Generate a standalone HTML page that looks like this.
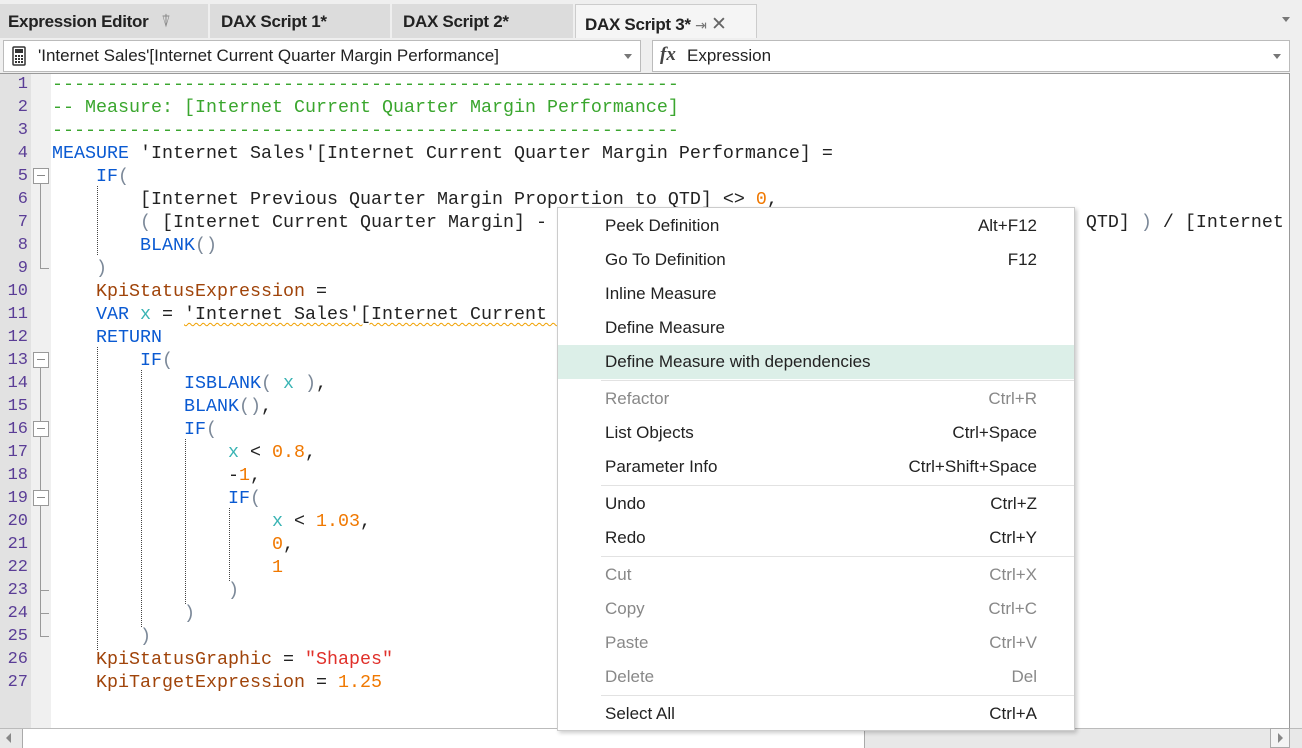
<!DOCTYPE html>
<html><head><meta charset="utf-8"><style>
*{margin:0;padding:0;box-sizing:border-box}
body{width:1302px;height:748px;overflow:hidden;background:#efefef;font-family:"Liberation Sans",sans-serif;position:relative}
.tab{position:absolute;top:4px;height:34px;background:#dcdcdc;font-weight:bold;font-size:17px;color:#222;padding:8px 0 0 8px;letter-spacing:-0.3px}
.combo{position:absolute;top:40px;height:32px;background:#fff;border:1px solid #bbb;font-size:17px;color:#222;padding:5px 0 0 34px}
.arr{position:absolute;right:8px;top:13px;width:0;height:0;border-left:4px solid transparent;border-right:4px solid transparent;border-top:5px solid #777}
#ed{position:absolute;left:0;top:73px;width:1290px;height:655px;background:#fff;border-top:1px solid #999;border-right:1px solid #999;overflow:hidden}
#ln{position:absolute;left:0;top:0;width:31px;height:655px;background:#e2e2e2}
#fd{position:absolute;left:31px;top:0;width:20px;height:655px;background:#f0f0f0}
.l{position:absolute;left:52px;height:23px;font-family:"Liberation Mono",monospace;font-size:18.33px;line-height:23px;white-space:pre;color:#222}
.n{position:absolute;left:0;width:28px;text-align:right;font-family:"Liberation Mono",monospace;font-size:17px;line-height:23px;color:#5a3d96}
.c{color:#3aa62e}.k{color:#0a5ad2}.b{color:#a0440a}.s{color:#e0302a}.o{color:#f07800}.x{color:#3ab4b4}.p{color:#7b8898}
.fb{position:absolute;left:33px;width:16px;height:16px;border:1px solid #999;background:#fff}
.fb:after{content:"";position:absolute;left:3px;top:6px;width:8px;height:1px;background:#888}
.fl{position:absolute;left:40px;width:1px;background:#999}
.ft{position:absolute;left:40px;width:9px;height:1px;background:#999}
.g{position:absolute;width:0;border-left:1px dotted #444}
#menu{position:absolute;left:557px;top:207px;width:518px;height:524px;background:#fff;border:1px solid #ccc;box-shadow:2px 2px 4px rgba(0,0,0,.2);font-size:17px}
.mi{position:absolute;left:0;width:516px;height:34px;line-height:34px;padding-left:47px;color:#222}
.mi span{position:absolute;right:37px;top:0}
.dis{color:#888}
.sep{position:absolute;left:43px;right:0;height:1px;background:#e2e2e2}
</style></head><body>
<div class="tab" style="left:0;width:208px">Expression Editor <span style="color:#888;font-weight:normal;margin-left:8px">&#x2352;</span></div>
<div class="tab" style="left:210px;width:180px;padding-left:11px">DAX Script 1*</div>
<div class="tab" style="left:392px;width:181px;padding-left:11px">DAX Script 2*</div>
<div class="tab" style="left:575px;width:182px;background:#f5f5f5;border:1px solid #ccc;border-bottom:none;padding-left:9px">DAX Script 3* <span style="font-weight:normal;color:#777;font-size:14px">&#x21E5;</span> <span style="font-weight:normal;color:#666;font-size:19px">✕</span></div>
<div class="arr" style="right:12px;top:17px;left:auto;position:absolute"></div>
<div class="combo" style="left:3px;width:638px"><svg style="position:absolute;left:8px;top:5px" width="14" height="20" viewBox="0 0 14 20"><rect x="1" y="1" width="12" height="18" rx="1" fill="none" stroke="#333" stroke-width="1.5"/><rect x="3" y="3" width="8" height="4" fill="#333"/><g fill="#333"><rect x="3" y="9" width="2" height="2"/><rect x="6" y="9" width="2" height="2"/><rect x="9" y="9" width="2" height="2"/><rect x="3" y="12" width="2" height="2"/><rect x="6" y="12" width="2" height="2"/><rect x="9" y="12" width="2" height="2"/><rect x="3" y="15" width="2" height="2"/><rect x="6" y="15" width="2" height="2"/><rect x="9" y="15" width="2" height="2"/></g></svg>'Internet Sales'[Internet Current Quarter Margin Performance]<div class="arr"></div></div>
<div class="combo" style="left:652px;width:638px"><span style="position:absolute;left:7px;top:3px;font-family:'Liberation Serif',serif;font-style:italic;font-weight:bold;font-size:19px;color:#444">fx</span>Expression<div class="arr"></div></div>
<div id="ed">
<div id="ln"></div><div id="fd"></div>
<div class="n" style="top:-1px">1</div><div class="n" style="top:22px">2</div><div class="n" style="top:45px">3</div><div class="n" style="top:68px">4</div><div class="n" style="top:91px">5</div><div class="n" style="top:114px">6</div><div class="n" style="top:137px">7</div><div class="n" style="top:160px">8</div><div class="n" style="top:183px">9</div><div class="n" style="top:206px">10</div><div class="n" style="top:229px">11</div><div class="n" style="top:252px">12</div><div class="n" style="top:275px">13</div><div class="n" style="top:298px">14</div><div class="n" style="top:321px">15</div><div class="n" style="top:344px">16</div><div class="n" style="top:367px">17</div><div class="n" style="top:390px">18</div><div class="n" style="top:413px">19</div><div class="n" style="top:436px">20</div><div class="n" style="top:459px">21</div><div class="n" style="top:482px">22</div><div class="n" style="top:505px">23</div><div class="n" style="top:528px">24</div><div class="n" style="top:551px">25</div><div class="n" style="top:574px">26</div><div class="n" style="top:597px">27</div>
<div class="fl" style="top:110px;height:85px"></div><div class="ft" style="top:194px"></div>
<div class="fl" style="top:294px;height:269px"></div><div class="ft" style="top:562px"></div><div class="ft" style="top:539px"></div><div class="ft" style="top:516px"></div>
<div class="fb" style="top:94px"></div><div class="fb" style="top:278px"></div><div class="fb" style="top:347px"></div><div class="fb" style="top:416px"></div>
<div class="g" style="left:97px;top:112px;height:69px"></div>
<div class="g" style="left:97px;top:273px;height:303px"></div>
<div class="g" style="left:141px;top:296px;height:257px"></div>
<div class="g" style="left:185px;top:365px;height:165px"></div>
<div class="g" style="left:229px;top:434px;height:73px"></div>
<div class="l c" style="top:-1px">---------------------------------------------------------</div>
<div class="l c" style="top:22px">-- Measure: [Internet Current Quarter Margin Performance]</div>
<div class="l c" style="top:45px">---------------------------------------------------------</div>
<div class="l" style="top:68px"><span class="k">MEASURE</span> 'Internet Sales'[Internet Current Quarter Margin Performance] =</div>
<div class="l" style="top:91px">    <span class="k">IF</span><span class="p">(</span></div>
<div class="l" style="top:114px">        [Internet Previous Quarter Margin Proportion to QTD] &lt;&gt; <span class="o">0</span>,</div>
<div class="l" style="top:137px">        <span class="p">(</span> [Internet Current Quarter Margin] - [Internet Previous Quarter Margin Proportion to QTD] <span class="p">)</span> / [Internet</div>
<div class="l" style="top:160px">        <span class="k">BLANK</span><span class="p">()</span></div>
<div class="l" style="top:183px">    <span class="p">)</span></div>
<div class="l b" style="top:206px">    KpiStatusExpression <span style="color:#222">=</span></div>
<div class="l" style="top:229px">    <span class="k">VAR</span> <span class="x">x</span> = <span style="text-decoration:underline wavy #f0a000;text-decoration-thickness:1px;text-underline-offset:3px">'Internet Sales'[Internet Current </span></div>
<div class="l" style="top:252px">    <span class="k">RETURN</span></div>
<div class="l" style="top:275px">        <span class="k">IF</span><span class="p">(</span></div>
<div class="l" style="top:298px">            <span class="k">ISBLANK</span><span class="p">(</span> <span class="x">x</span> <span class="p">)</span>,</div>
<div class="l" style="top:321px">            <span class="k">BLANK</span><span class="p">()</span>,</div>
<div class="l" style="top:344px">            <span class="k">IF</span><span class="p">(</span></div>
<div class="l" style="top:367px">                <span class="x">x</span> &lt; <span class="o">0.8</span>,</div>
<div class="l" style="top:390px">                -<span class="o">1</span>,</div>
<div class="l" style="top:413px">                <span class="k">IF</span><span class="p">(</span></div>
<div class="l" style="top:436px">                    <span class="x">x</span> &lt; <span class="o">1.03</span>,</div>
<div class="l" style="top:459px">                    <span class="o">0</span>,</div>
<div class="l" style="top:482px">                    <span class="o">1</span></div>
<div class="l" style="top:505px">                <span class="p">)</span></div>
<div class="l" style="top:528px">            <span class="p">)</span></div>
<div class="l" style="top:551px">        <span class="p">)</span></div>
<div class="l b" style="top:574px">    KpiStatusGraphic <span style="color:#222">=</span> <span class="s">"Shapes"</span></div>
<div class="l b" style="top:597px">    KpiTargetExpression <span style="color:#222">=</span> <span class="o">1.25</span></div>
</div>
<div style="position:absolute;left:0;top:728px;width:1302px;height:20px;background:#e8e8e8;border-top:1px solid #bbb"></div>
<div style="position:absolute;left:22px;top:729px;width:843px;height:19px;background:#fff;border-left:1px solid #aaa;border-right:1px solid #aaa"></div>
<div style="position:absolute;left:6px;top:733px;border-top:5px solid transparent;border-bottom:5px solid transparent;border-right:5px solid #888"></div>
<div style="position:absolute;left:1270px;top:728px;width:20px;height:20px;border:1px solid #aaa;background:#f4f4f4"></div>
<div style="position:absolute;left:1278px;top:733px;border-top:5px solid transparent;border-bottom:5px solid transparent;border-left:5px solid #888"></div>
<div id="menu">
<div class="mi" style="top:1px">Peek Definition<span>Alt+F12</span></div>
<div class="mi" style="top:35px">Go To Definition<span>F12</span></div>
<div class="mi" style="top:69px">Inline Measure</div>
<div class="mi" style="top:103px">Define Measure</div>
<div class="mi" style="top:137px;background:#dcefe8">Define Measure with dependencies</div>
<div class="sep" style="top:172px"></div>
<div class="mi dis" style="top:174px">Refactor<span>Ctrl+R</span></div>
<div class="mi" style="top:208px">List Objects<span>Ctrl+Space</span></div>
<div class="mi" style="top:242px">Parameter Info<span>Ctrl+Shift+Space</span></div>
<div class="sep" style="top:277px"></div>
<div class="mi" style="top:279px">Undo<span>Ctrl+Z</span></div>
<div class="mi" style="top:313px">Redo<span>Ctrl+Y</span></div>
<div class="sep" style="top:348px"></div>
<div class="mi dis" style="top:350px">Cut<span>Ctrl+X</span></div>
<div class="mi dis" style="top:384px">Copy<span>Ctrl+C</span></div>
<div class="mi dis" style="top:418px">Paste<span>Ctrl+V</span></div>
<div class="mi dis" style="top:452px">Delete<span>Del</span></div>
<div class="sep" style="top:487px"></div>
<div class="mi" style="top:489px">Select All<span>Ctrl+A</span></div>
</div>
</body></html>
